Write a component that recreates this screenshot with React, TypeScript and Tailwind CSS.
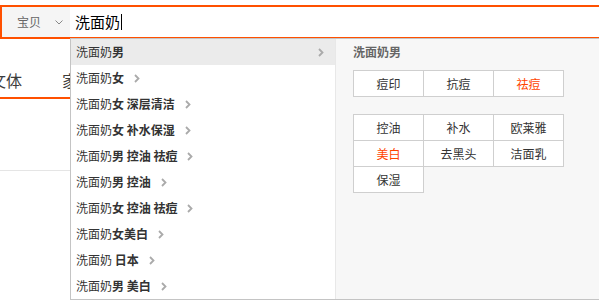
import React from "react";

type Suggestion = {
  base: string;
  bold: string;
};

const suggestions: Suggestion[] = [
  { base: "洗面奶", bold: "男" },
  { base: "洗面奶", bold: "女" },
  { base: "洗面奶", bold: "女 深层清洁" },
  { base: "洗面奶", bold: "女 补水保湿" },
  { base: "洗面奶", bold: "男 控油 祛痘" },
  { base: "洗面奶", bold: "男 控油" },
  { base: "洗面奶", bold: "女 控油 祛痘" },
  { base: "洗面奶", bold: "女美白" },
  { base: "洗面奶", bold: " 日本" },
  { base: "洗面奶", bold: "男 美白" },
];

const effectTags = [
  { label: "痘印" },
  { label: "抗痘" },
  { label: "祛痘", hot: true },
];

const propTags = [
  { label: "控油" },
  { label: "补水" },
  { label: "欧莱雅" },
  { label: "美白", hot: true },
  { label: "去黑头" },
  { label: "洁面乳" },
  { label: "保湿" },
];

const Chevron: React.FC<{ className?: string }> = ({ className }) => (
  <svg width="6" height="9" viewBox="0 0 6 9" className={className}>
    <polyline
      points="1,1 4.5,4.5 1,8"
      fill="none"
      stroke="#aaaaaa"
      strokeWidth="1.8"
    />
  </svg>
);

const TagGrid: React.FC<{ tags: { label: string; hot?: boolean }[] }> = ({ tags }) => (
  <div className="grid grid-cols-3 w-fit border-l border-t border-[#cfcfcf]">
    {tags.map((tag, i) => (
      <div
        key={i}
        className={`w-[70px] h-[26px] bg-white border-r border-b border-[#cfcfcf] flex items-center justify-center text-[12px] ${
          tag.hot ? "text-[#ff4400]" : "text-[#333]"
        }`}
      >
        {tag.label}
      </div>
    ))}
  </div>
);

export default function App() {
  return (
    <div
      className="relative w-[599px] h-[301px] bg-white overflow-hidden"
      style={{ fontFamily: '"Noto Sans CJK SC", "Noto Sans", sans-serif' }}
    >
      {/* search bar */}
      <div className="mt-[5px] w-[620px] h-[34px] flex border-2 border-[#ff5000]">
        <div className="w-[68px] bg-[#f5f5f5] flex items-center text-[12px] text-[#666]">
          <span className="ml-[15px]">宝贝</span>
          <svg width="8" height="5" viewBox="0 0 8 5" className="ml-[14px]">
            <polyline points="0.5,0.5 4,4 7.5,0.5" fill="none" stroke="#888" strokeWidth="1" />
          </svg>
        </div>
        <div className="flex-1 bg-white flex items-center pl-[5px] text-[15px] text-black">
          洗面奶
          <span className="w-px h-[16px] bg-black ml-px" />
        </div>
      </div>

      {/* tabs behind dropdown */}
      <div className="mt-[30px] flex items-end h-[28px] text-[16px] text-[#3c3c3c]">
        <div className="ml-[-10px] pb-[7px] leading-[20px]">文体</div>
        <div className="ml-[40px] pb-[7px] leading-[20px]">家</div>
      </div>
      <div className="w-[90px] h-[2px] bg-[#ff5000]" />
      <div className="mt-[71px] w-[90px] h-px bg-[#e5e5e5]" />

      {/* suggest dropdown */}
      <div className="absolute left-[70px] top-[38px] w-[540px] h-[262px] border border-[#c4c4c4] bg-white flex">
        <div className="w-[264px] flex flex-col">
          {suggestions.map((s, i) => (
            <div
              key={i}
              className={`h-[26px] flex items-center pl-[5px] text-[12px] text-[#333] ${
                i === 0 ? "bg-[#ebebeb] pr-[11px]" : ""
              }`}
            >
              <span className="whitespace-pre">
                {s.base}
                <b className="font-bold">{s.bold}</b>
              </span>
              <Chevron className={i === 0 ? "ml-auto" : "ml-[10px]"} />
            </div>
          ))}
        </div>
        <div className="flex-1 bg-[#f7f7f7] border-l border-[#e8e8e8] pl-[17px]">
          <div className="h-[26px] leading-[26px] text-[12px] font-bold text-[#666]">洗面奶男</div>
          <div className="mt-[5px]">
            <TagGrid tags={effectTags} />
          </div>
          <div className="mt-[17px]">
            <TagGrid tags={propTags} />
          </div>
        </div>
      </div>
    </div>
  );
}
